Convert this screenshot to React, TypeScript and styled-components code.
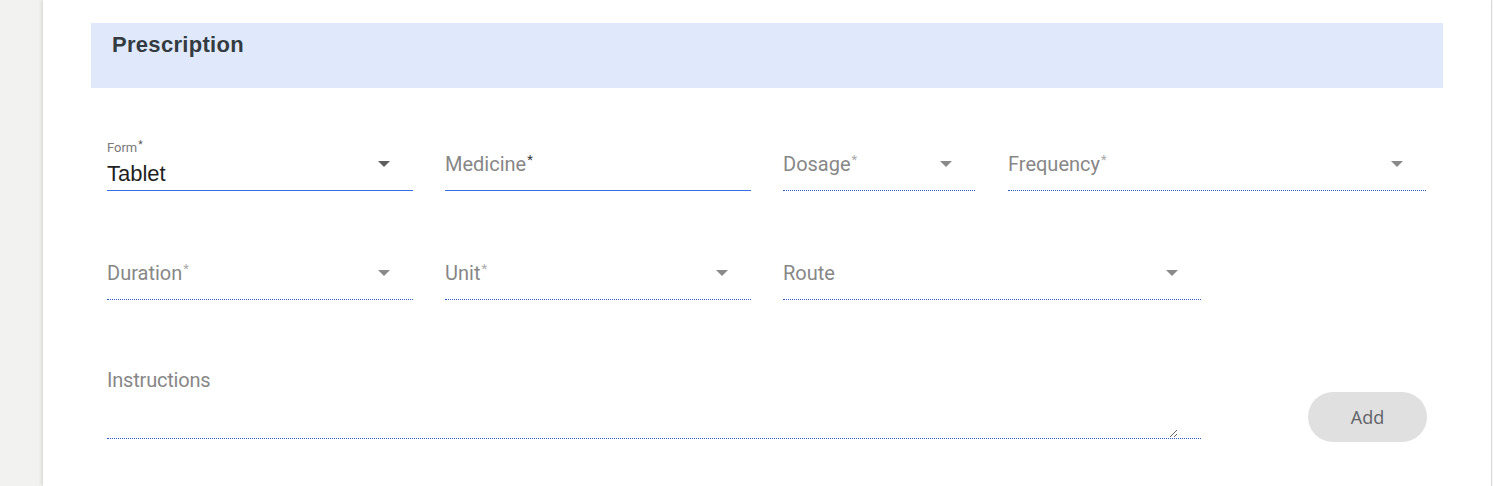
import React from "react";
import styled, { createGlobalStyle } from "styled-components";

const GlobalStyle = createGlobalStyle`
  html, body {
    margin: 0;
    padding: 0;
    background: #ffffff;
  }
  body {
    font-family: Roboto, "Liberation Sans", Arial, sans-serif;
  }
  * {
    box-sizing: border-box;
  }
`;

type Tone = "solid" | "dotted";

const Page = styled.div`
  display: flex;
  height: 486px;
  overflow: hidden;
  background: #ffffff;
`;

const Gutter = styled.div`
  width: 43px;
  flex: none;
  background: #f2f2f0;
`;

const Card = styled.div`
  flex: 1;
  background: #ffffff;
  border-right: 1px solid #d9d9d9;
  box-shadow: -1px 0 4px rgba(0, 0, 0, 0.14);
  padding: 23px 48px 0 48px;
  position: relative;
  z-index: 1;
`;

const RightEdge = styled.div`
  width: 1px;
  flex: none;
  background: #ffffff;
`;

const Band = styled.div`
  height: 65px;
  background: #e0e9fc;
  padding: 9px 21px;
`;

const Title = styled.h2`
  margin: 0;
  font-family: "Liberation Sans", Arial, sans-serif;
  font-size: 22px;
  line-height: 25px;
  font-weight: 700;
  letter-spacing: 0.3px;
  color: #333b40;
`;

const Form = styled.div`
  padding: 47px 17px 0 16px;
  display: flex;
  flex-direction: column;
  gap: 53px;
`;

const Row = styled.div`
  display: flex;
  align-items: flex-end;
  gap: 32px;
`;

const Field = styled.div<{ $w: number; $line: Tone; $h?: number; $shift?: number }>`
  position: relative;
  width: ${(p) => p.$w}px;
  flex: none;
  margin-left: ${(p) => p.$shift ?? 0}px;
  height: ${(p) => p.$h ?? 56}px;
  display: flex;
  flex-direction: column;
  justify-content: flex-end;
  border-bottom: 1px ${(p) => p.$line} ${(p) => (p.$line === "solid" ? "#3a6fe6" : "#2d5bc9")};
`;

const Placeholder = styled.div`
  padding-bottom: 14px;
  font-size: 20px;
  line-height: 24px;
  color: #878787;
`;

const Star = styled.sup<{ $dark?: boolean }>`
  font-size: 13px;
  line-height: 0;
  vertical-align: 7px;
  margin-left: 1px;
  color: ${(p) => (p.$dark ? "#3a3a3a" : "#a9a9a9")};
`;

const SmallLabel = styled.div`
  font-size: 13px;
  line-height: 16px;
  color: #7a7a7a;
  margin-top: 2px;
`;

const SmallStar = styled.sup`
  font-size: 10px;
  line-height: 0;
  vertical-align: 4px;
  margin-left: 1px;
  color: #555555;
`;

const Value = styled.div`
  margin-top: 5px;
  padding-bottom: 3px;
  font-family: "Liberation Sans", Arial, sans-serif;
  font-size: 22px;
  line-height: 26px;
  color: #1f1f1f;
`;

const Caret = styled.svg<{ $dark?: boolean }>`
  position: absolute;
  top: 26px;
  right: 23px;
  width: 12px;
  height: 6px;
  fill: ${(p) => (p.$dark ? "#5e5e5e" : "#8a8a8a")};
`;

const Notes = styled.textarea`
  width: calc(100% - 23px);
  height: 85px;
  margin: 0;
  padding: 15px 0 0 0;
  border: none;
  outline: none;
  background: transparent;
  resize: vertical;
  font-family: Roboto, "Liberation Sans", Arial, sans-serif;
  font-size: 20px;
  line-height: 24px;
  letter-spacing: -0.2px;
  color: #222222;
  &::placeholder {
    color: #878787;
  }
`;

const AddButton = styled.button`
  margin-left: auto;
  margin-right: -1px;
  margin-bottom: -3px;
  width: 119px;
  height: 50px;
  border: none;
  border-radius: 25px;
  background: #e0e0e0;
  font-family: "Open Sans", "Liberation Sans", sans-serif;
  font-size: 18px;
  color: #5f6368;
  cursor: pointer;
`;

const Arrow = ({ dark }: { dark?: boolean }) => (
  <Caret $dark={dark} viewBox="0 0 12 6">
    <polygon points="0,0 12,0 6,6" />
  </Caret>
);

type SelectProps = {
  label: string;
  width: number;
  required?: boolean;
  darkStar?: boolean;
  line?: Tone;
  select?: boolean;
  shift?: number;
};

const EmptyField = ({ label, width, required, darkStar, line = "dotted", select = true, shift }: SelectProps) => (
  <Field $w={width} $line={line} $shift={shift}>
    <Placeholder>
      {label}
      {required && <Star $dark={darkStar}>*</Star>}
    </Placeholder>
    {select && <Arrow />}
  </Field>
);

const App: React.FC = () => {
  return (
    <>
      <GlobalStyle />
      <Page>
        <Gutter />
        <Card>
          <Band>
            <Title>Prescription</Title>
          </Band>
          <Form>
            <Row>
              <Field $w={306} $line="solid">
                <SmallLabel>
                  Form<SmallStar>*</SmallStar>
                </SmallLabel>
                <Value>Tablet</Value>
                <Arrow dark />
              </Field>
              <EmptyField label="Medicine" width={306} required darkStar line="solid" select={false} />
              <EmptyField label="Dosage" width={192} required />
              <EmptyField label="Frequency" width={418} required shift={1} />
            </Row>
            <Row>
              <EmptyField label="Duration" width={306} required />
              <EmptyField label="Unit" width={306} required />
              <EmptyField label="Route" width={418} />
            </Row>
            <Row>
              <Field $w={1094} $line="dotted" $h={86}>
                <Notes placeholder="Instructions" />
              </Field>
              <AddButton>Add</AddButton>
            </Row>
          </Form>
        </Card>
        <RightEdge />
      </Page>
    </>
  );
};

export default App;
